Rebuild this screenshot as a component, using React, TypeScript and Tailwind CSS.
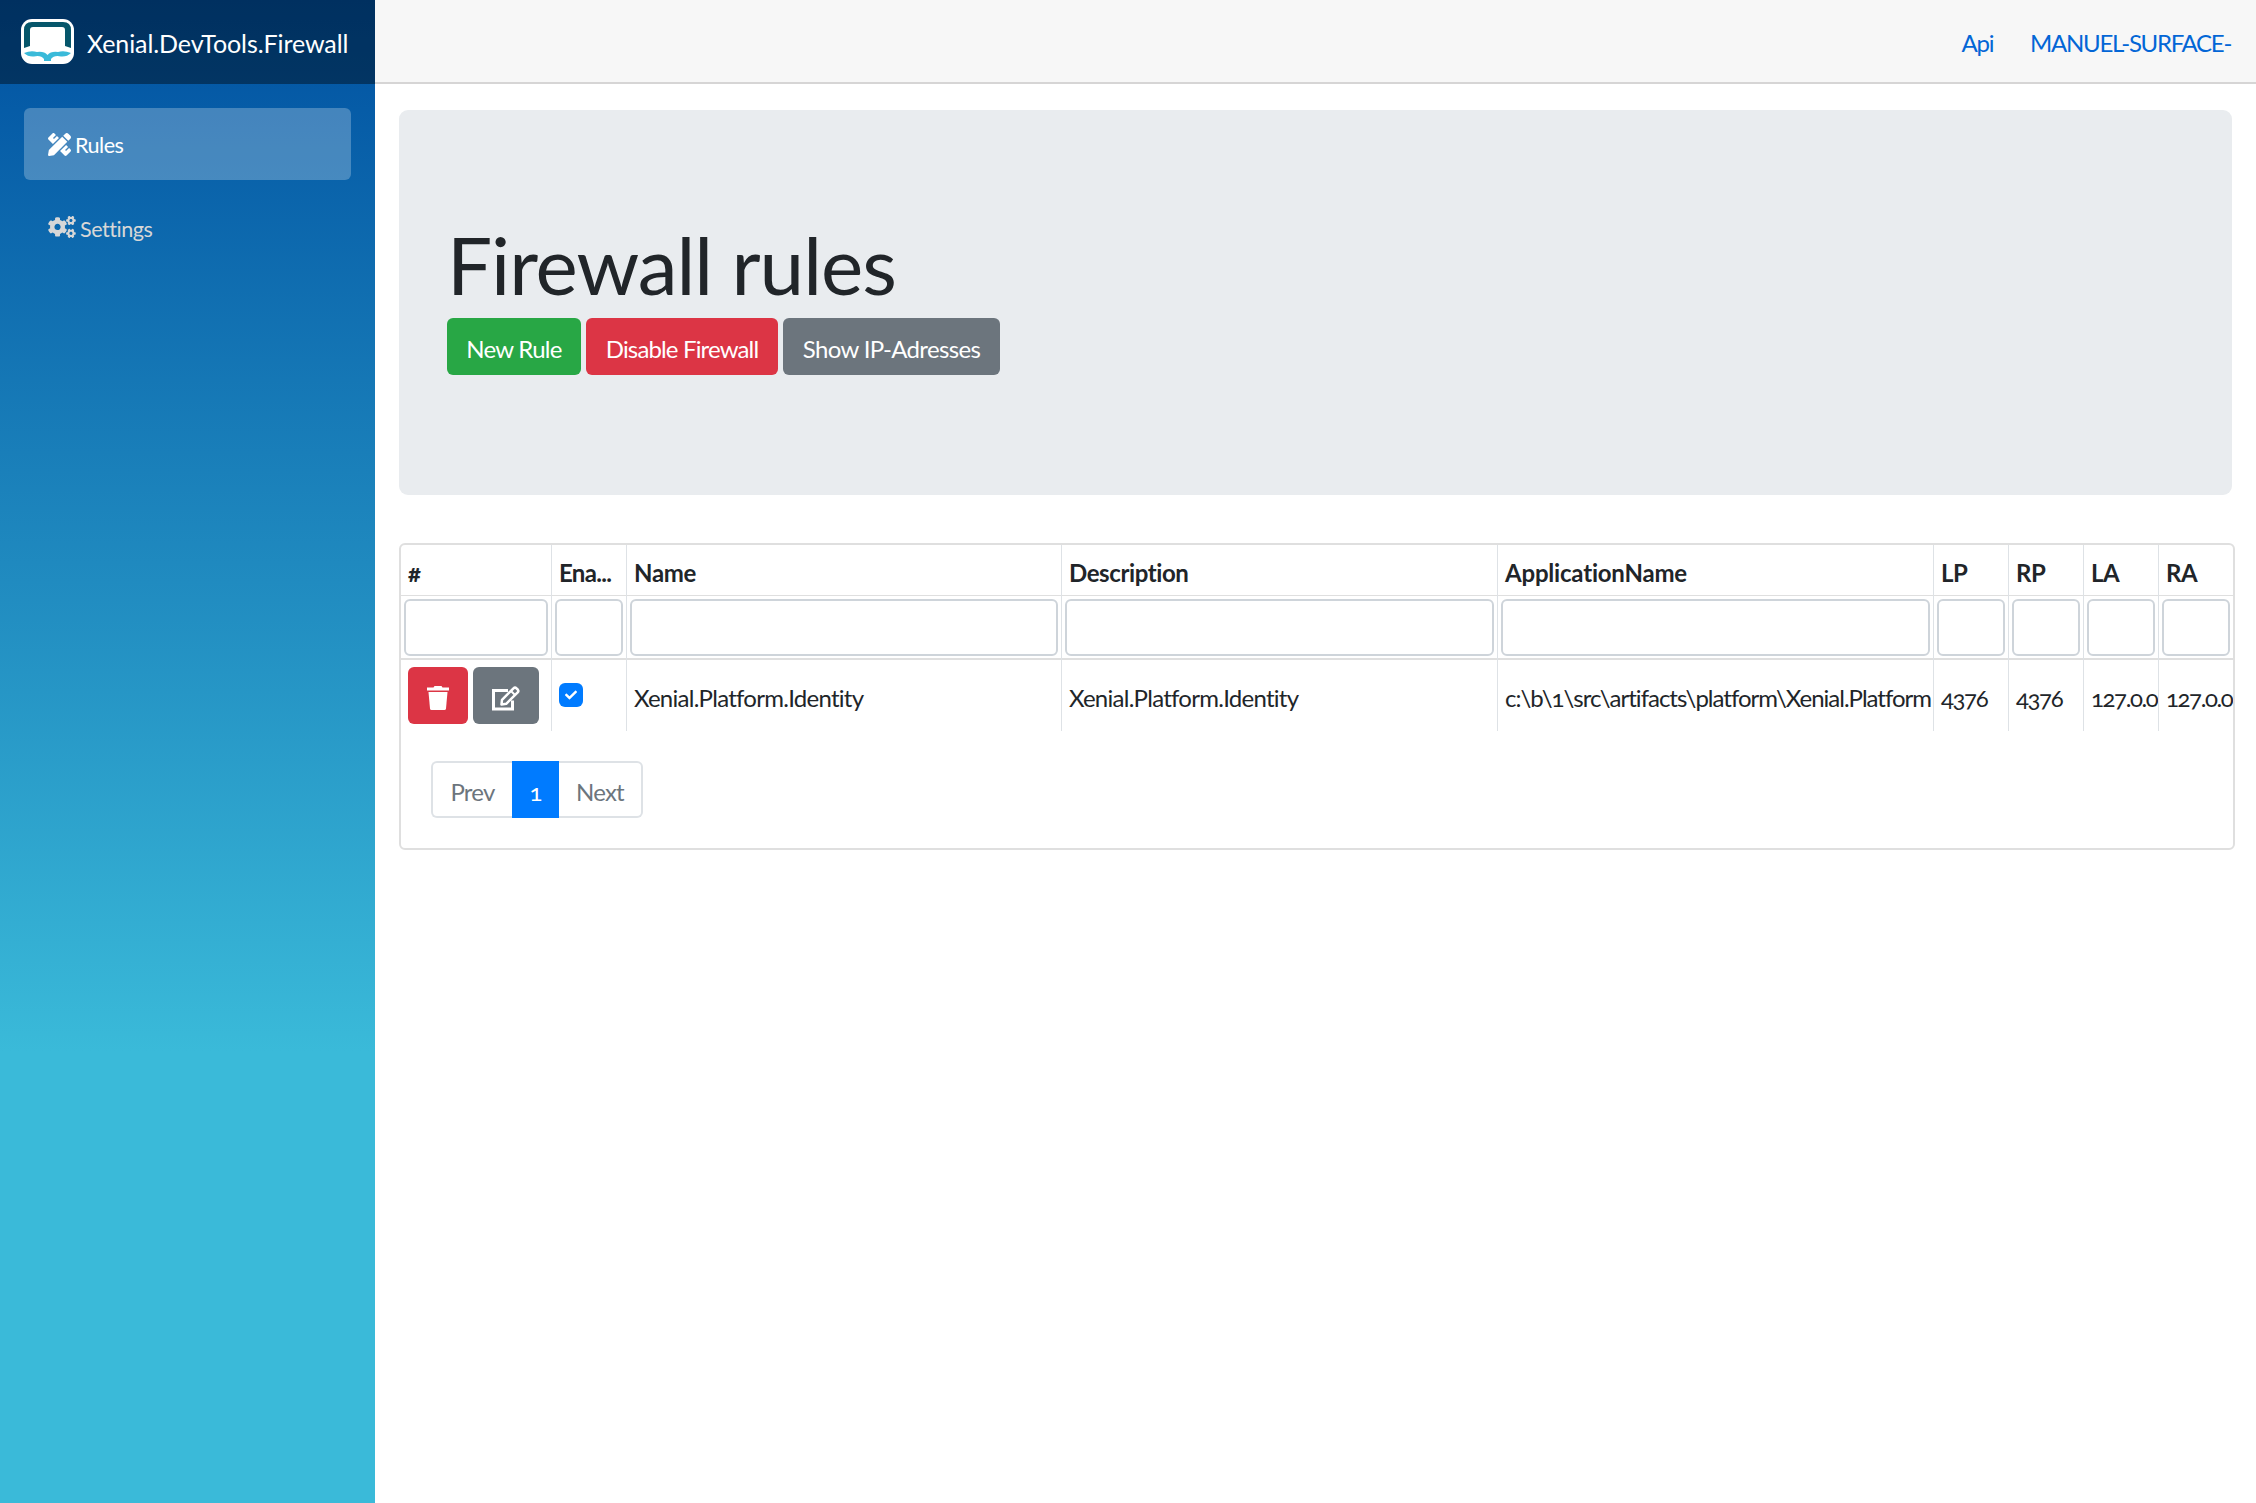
import { FaPencilRuler, FaCogs, FaCheck } from "react-icons/fa";

const columns = [
  { label: "#", width: "w-[151px]", text: "", ls: "", hs: "" },
  { label: "Ena...", width: "w-[75px]", text: "", ls: "", hs: "tracking-[-0.7px]" },
  { label: "Name", width: "w-[435px]", text: "Xenial.Platform.Identity", ls: "tracking-[-0.73px]", hs: "tracking-[-0.3px]" },
  { label: "Description", width: "w-[436px]", text: "Xenial.Platform.Identity", ls: "tracking-[-0.73px]", hs: "tracking-[-0.4px]" },
  { label: "ApplicationName", width: "w-[436px]", text: "c:\\b\\1\\src\\artifacts\\platform\\Xenial.Platform", ls: "tracking-[-1px]", hs: "tracking-[-0.2px]" },
  { label: "LP", width: "w-[75px]", text: "4376", ls: "tracking-[-1.4px]", hs: "tracking-[-0.5px]" },
  { label: "RP", width: "w-[75px]", text: "4376", ls: "tracking-[-1.4px]", hs: "tracking-[-0.5px]" },
  { label: "LA", width: "w-[75px]", text: "127.0.0.1", ls: "tracking-[-1.4px]", hs: "tracking-[-0.5px]" },
  { label: "RA", width: "w-[74px]", text: "127.0.0.1", ls: "tracking-[-1.4px]", hs: "tracking-[-0.5px]" },
];

function Logo() {
  return (
    <svg viewBox="0 0 53 45" className="h-[45px] w-[53px]">
      <rect width="53" height="45" rx="11" fill="#fff" />
      <path d="M3 29V11Q3 3 11 3H42Q50 3 50 11V29L44 27V11Q44 8 41 8H12Q9 8 9 11V27Z" fill="#06566b" />
      <path d="M3 34Q10 31 16 33Q23 32 26.500 36Q30 32 37 33Q43 31 50 34Q46 38 40 37.500Q33 36 30 40V42H23V40Q20 36 13 37.500Q7 38 3 34Z" fill="#3abad9" />
    </svg>
  );
}

function TrashIcon() {
  return (
    <svg viewBox="0 0 22 24" className="h-[24px] w-[22px]" fill="currentColor">
      <path d="M0 1.500H6.500L7.500 0H14.500L15.500 1.500H22V4.500H0Z" />
      <path d="M1.500 6H20.500L19 22.500Q18.800 24 17.500 24H4.500Q3.200 24 3 22.500Z" />
    </svg>
  );
}

function EditIcon() {
  return (
    <svg viewBox="0 0 28 25" className="h-[25px] w-[28px]" fill="none" stroke="currentColor">
      <path d="M16 4.500H1.500V23H20.500V14.500" strokeWidth="3" />
      <path d="M9.500 18.500L10 13.800L21.500 2.300Q23 0.900 24.500 2.300L25.700 3.500Q27 5 25.700 6.300L14.200 17.800Z" strokeWidth="2.500" strokeLinejoin="round" />
      <path d="M19 5L23 9" strokeWidth="2" />
    </svg>
  );
}

export default function App() {
  return (
    <div className="flex h-[1503px] w-[2256px] overflow-hidden bg-white font-[Lato,sans-serif] text-[24px] leading-[36px] text-[#212529] oldstyle-nums">
      <aside className="flex w-[375px] flex-col bg-[linear-gradient(180deg,#0051a1_0%,#3abad9_70%)]">
        <div className="flex h-[84px] items-center bg-black/40 pl-[21px] text-white">
          <div className="-mt-px">
            <Logo />
          </div>
          <span className="ml-[13px] mt-px whitespace-nowrap text-[25px] tracking-[-0.08px]">Xenial.DevTools.Firewall</span>
        </div>
        <nav className="flex flex-col gap-[12px] px-[24px] pt-[24px] text-[21.6px] tracking-[-0.5px]">
          <a className="flex h-[72px] items-center rounded-[6px] bg-white/25 pl-[24px] text-white">
            <FaPencilRuler className="size-[23px]" />
            <span className="ml-[4px] mt-[2px]">Rules</span>
          </a>
          <a className="flex h-[72px] items-center pl-[24px] text-[#d7d7d7]">
            <FaCogs className="-mt-[2px] h-[22px] w-[28px]" />
            <span className="ml-[4px] mt-px">Settings</span>
          </a>
        </nav>
      </aside>
      <main className="flex flex-1 flex-col">
        <header className="flex h-[84px] items-center justify-end gap-[37px] border-b-2 border-[#d6d5d5] bg-[#f7f7f7] pr-[25px] pt-[4px] tracking-[-1.3px] text-[#0366d6]">
          <a>Api</a>
          <a>MANUEL-SURFACE-</a>
        </header>
        <section className="ml-[24px] mr-[24px] mt-[26px] h-[385px] rounded-[9px] bg-[#e9ecef] pl-[48px] pt-[104px]">
          <h1 className="h-[104px] whitespace-nowrap text-[80px] font-normal leading-[100px] tracking-[-1.05px]">Firewall rules</h1>
          <div className="flex gap-[5px] text-white">
            <button className="h-[57px] w-[134px] rounded-[6px] bg-[#28a745] pt-[5px] tracking-[-0.75px]">New Rule</button>
            <button className="h-[57px] w-[192px] rounded-[6px] bg-[#dc3545] pt-[5px] tracking-[-0.85px]">Disable Firewall</button>
            <button className="h-[57px] w-[217px] rounded-[6px] bg-[#6c757d] pt-[5px] tracking-[-0.65px]">Show IP-Adresses</button>
          </div>
        </section>
        <section className="ml-[24px] mt-[48px] h-[307px] w-[1836px] rounded-[6px] border-2 border-[#dfdfdf]">
          <div className="flex">
            {columns.map((c, i) => (
              <div key={c.label} className={`${c.width} shrink-0 ${i < 8 ? "border-r border-[#dee2e6]" : ""}`}>
                <div className={`h-[51px] overflow-hidden whitespace-nowrap border-b border-[#dfdfdf] pl-[7px] pt-[10px] font-bold ${c.hs}`}>{c.label}</div>
                <div className="h-[64px] border-b-2 border-[#dfdfdf] p-[3px]">
                  <div className="h-[57px] rounded-[6px] border-2 border-[#ced4da]" />
                </div>
                <div className={`h-[71px] overflow-hidden whitespace-nowrap pl-[7px] ${i > 1 ? "pt-[20px]" : "pt-[7px]"} ${c.ls}`}>
                  {i === 0 && (
                    <div className="flex gap-[5px] text-white">
                      <span className="flex h-[57px] w-[60px] items-center justify-center rounded-[6px] bg-[#dc3545] pt-[5px]">
                        <TrashIcon />
                      </span>
                      <span className="flex h-[57px] w-[66px] items-center justify-center rounded-[6px] bg-[#6c757d] pt-[5px]">
                        <EditIcon />
                      </span>
                    </div>
                  )}
                  {i === 1 && (
                    <span className="mt-[16px] flex size-[24px] items-center justify-center rounded-[6px] bg-[#007bff] text-white">
                      <FaCheck className="size-[12px]" />
                    </span>
                  )}
                  {c.text}
                </div>
              </div>
            ))}
          </div>
          <div className="ml-[30px] mt-[30px] flex h-[57px] w-[212px] tracking-[-0.8px] text-[#6c757d]">
            <span className="w-[81px] rounded-l-[6px] border-2 border-r-0 border-[#dee2e6] pt-[11px] text-center">Prev</span>
            <span className="w-[47px] bg-[#007bff] pt-[13px] text-center text-white">1</span>
            <span className="w-[84px] rounded-r-[6px] border-2 border-l-0 border-[#dee2e6] pt-[11px] text-center">Next</span>
          </div>
        </section>
      </main>
    </div>
  );
}
